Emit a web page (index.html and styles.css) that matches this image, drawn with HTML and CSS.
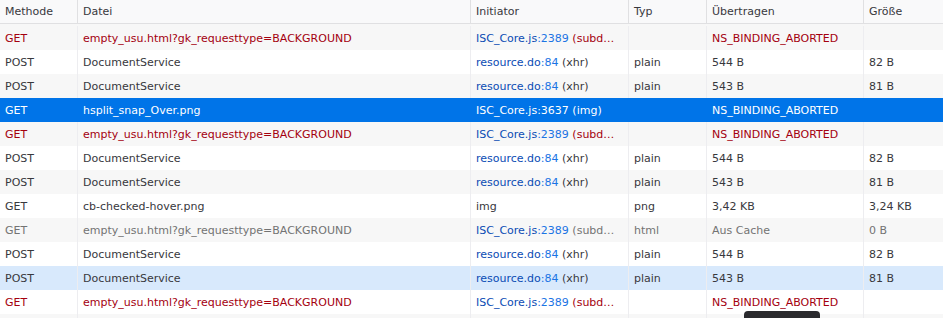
FILE: index.html
```html
<!DOCTYPE html>
<html lang="de">
<head>
    <meta charset="UTF-8">
    <title>Netzwerkanalyse</title>
    <link rel="stylesheet" href="styles.css">
</head>
<body>
    <div class="requests">
        <div class="row head">
            <div class="cell">Methode</div>
            <div class="cell">Datei</div>
            <div class="cell">Initiator</div>
            <div class="cell">Typ</div>
            <div class="cell">Übertragen</div>
            <div class="cell">Größe</div>
        </div>

        <div class="list">
            <div class="row blocked">
                <div class="cell">GET</div>
                <div class="cell">empty_usu.html?gk_requesttype=BACKGROUND</div>
                <div class="cell"><span class="file">ISC_Core.js</span><span class="line">:2389</span> (subd…</div>
                <div class="cell"></div>
                <div class="cell">NS_BINDING_ABORTED</div>
                <div class="cell"></div>
            </div>
            <div class="row">
                <div class="cell">POST</div>
                <div class="cell">DocumentService</div>
                <div class="cell"><span class="file">resource.do</span><span class="line">:84</span> (xhr)</div>
                <div class="cell">plain</div>
                <div class="cell">544 B</div>
                <div class="cell">82 B</div>
            </div>
            <div class="row">
                <div class="cell">POST</div>
                <div class="cell">DocumentService</div>
                <div class="cell"><span class="file">resource.do</span><span class="line">:84</span> (xhr)</div>
                <div class="cell">plain</div>
                <div class="cell">543 B</div>
                <div class="cell">81 B</div>
            </div>
            <div class="row selected">
                <div class="cell">GET</div>
                <div class="cell">hsplit_snap_Over.png</div>
                <div class="cell"><span class="file">ISC_Core.js</span><span class="line">:3637</span> (img)</div>
                <div class="cell"></div>
                <div class="cell">NS_BINDING_ABORTED</div>
                <div class="cell"></div>
            </div>
            <div class="row blocked">
                <div class="cell">GET</div>
                <div class="cell">empty_usu.html?gk_requesttype=BACKGROUND</div>
                <div class="cell"><span class="file">ISC_Core.js</span><span class="line">:2389</span> (subd…</div>
                <div class="cell"></div>
                <div class="cell">NS_BINDING_ABORTED</div>
                <div class="cell"></div>
            </div>
            <div class="row">
                <div class="cell">POST</div>
                <div class="cell">DocumentService</div>
                <div class="cell"><span class="file">resource.do</span><span class="line">:84</span> (xhr)</div>
                <div class="cell">plain</div>
                <div class="cell">544 B</div>
                <div class="cell">82 B</div>
            </div>
            <div class="row">
                <div class="cell">POST</div>
                <div class="cell">DocumentService</div>
                <div class="cell"><span class="file">resource.do</span><span class="line">:84</span> (xhr)</div>
                <div class="cell">plain</div>
                <div class="cell">543 B</div>
                <div class="cell">81 B</div>
            </div>
            <div class="row">
                <div class="cell">GET</div>
                <div class="cell">cb-checked-hover.png</div>
                <div class="cell">img</div>
                <div class="cell">png</div>
                <div class="cell">3,42 KB</div>
                <div class="cell">3,24 KB</div>
            </div>
            <div class="row cached">
                <div class="cell">GET</div>
                <div class="cell">empty_usu.html?gk_requesttype=BACKGROUND</div>
                <div class="cell"><span class="file">ISC_Core.js</span><span class="line">:2389</span> (subd…</div>
                <div class="cell">html</div>
                <div class="cell">Aus Cache</div>
                <div class="cell">0 B</div>
            </div>
            <div class="row">
                <div class="cell">POST</div>
                <div class="cell">DocumentService</div>
                <div class="cell"><span class="file">resource.do</span><span class="line">:84</span> (xhr)</div>
                <div class="cell">plain</div>
                <div class="cell">544 B</div>
                <div class="cell">82 B</div>
            </div>
            <div class="row hovered">
                <div class="cell">POST</div>
                <div class="cell">DocumentService</div>
                <div class="cell"><span class="file">resource.do</span><span class="line">:84</span> (xhr)</div>
                <div class="cell">plain</div>
                <div class="cell">543 B</div>
                <div class="cell">81 B</div>
            </div>
            <div class="row blocked">
                <div class="cell">GET</div>
                <div class="cell">empty_usu.html?gk_requesttype=BACKGROUND</div>
                <div class="cell"><span class="file">ISC_Core.js</span><span class="line">:2389</span> (subd…</div>
                <div class="cell"></div>
                <div class="cell">NS_BINDING_ABORTED</div>
                <div class="cell"></div>
            </div>
            <div class="row">
                <div class="cell"></div>
                <div class="cell"></div>
                <div class="cell"></div>
                <div class="cell"></div>
                <div class="cell"></div>
                <div class="cell"></div>
            </div>
        </div>

        <div class="tooltip"></div>
    </div>
</body>
</html>
```

FILE: styles.css
```css
body {
    margin: 0;
    font-family: "DejaVu Sans", sans-serif;
    font-size: 11px;
    color: #38383d;
    background: #fff;
    overflow: hidden;
}
.requests {
    position: relative;
    height: 318px;
    overflow: hidden;
}
.row {
    display: grid;
    grid-template-columns: 78px 393px 158px 78px 157px 1fr;
    height: 24px;
}
.cell {
    box-sizing: border-box;
    border-right: 1px solid #ededf0;
    padding: 1px 5px 0;
    line-height: 23px;
    white-space: nowrap;
    overflow: hidden;
    text-overflow: ellipsis;
}
.cell:last-child {
    border-right: none;
}
.head {
    height: 23px;
    background: #f9f9fa;
    border-bottom: 1px solid #e0e0e2;
}
.head .cell {
    padding-top: 0;
    line-height: 23px;
    border-right-color: #e0e0e2;
}
.list {
    padding-top: 2px;
    background: #f7f7f7;
}
.list .row:nth-child(even) {
    background: #fff;
}
.list .row:nth-child(odd) {
    background: #f7f7f7;
}
.file {
    color: #0b4cb4;
}
.line {
    color: #1b74e4;
}
.blocked {
    color: #a4000f;
}
.cached {
    color: #737373;
}
.list .row.selected {
    background: #0074e8;
    color: #fff;
}
.selected .cell {
    border-right-color: #0074e8;
}
.selected .file, .selected .line {
    color: #fff;
}
.list .row.hovered {
    background: #d8e9fc;
}
.tooltip {
    position: absolute;
    left: 744px;
    top: 311px;
    width: 76px;
    height: 20px;
    background: #2a2a2e;
    border-radius: 4px;
}
```
